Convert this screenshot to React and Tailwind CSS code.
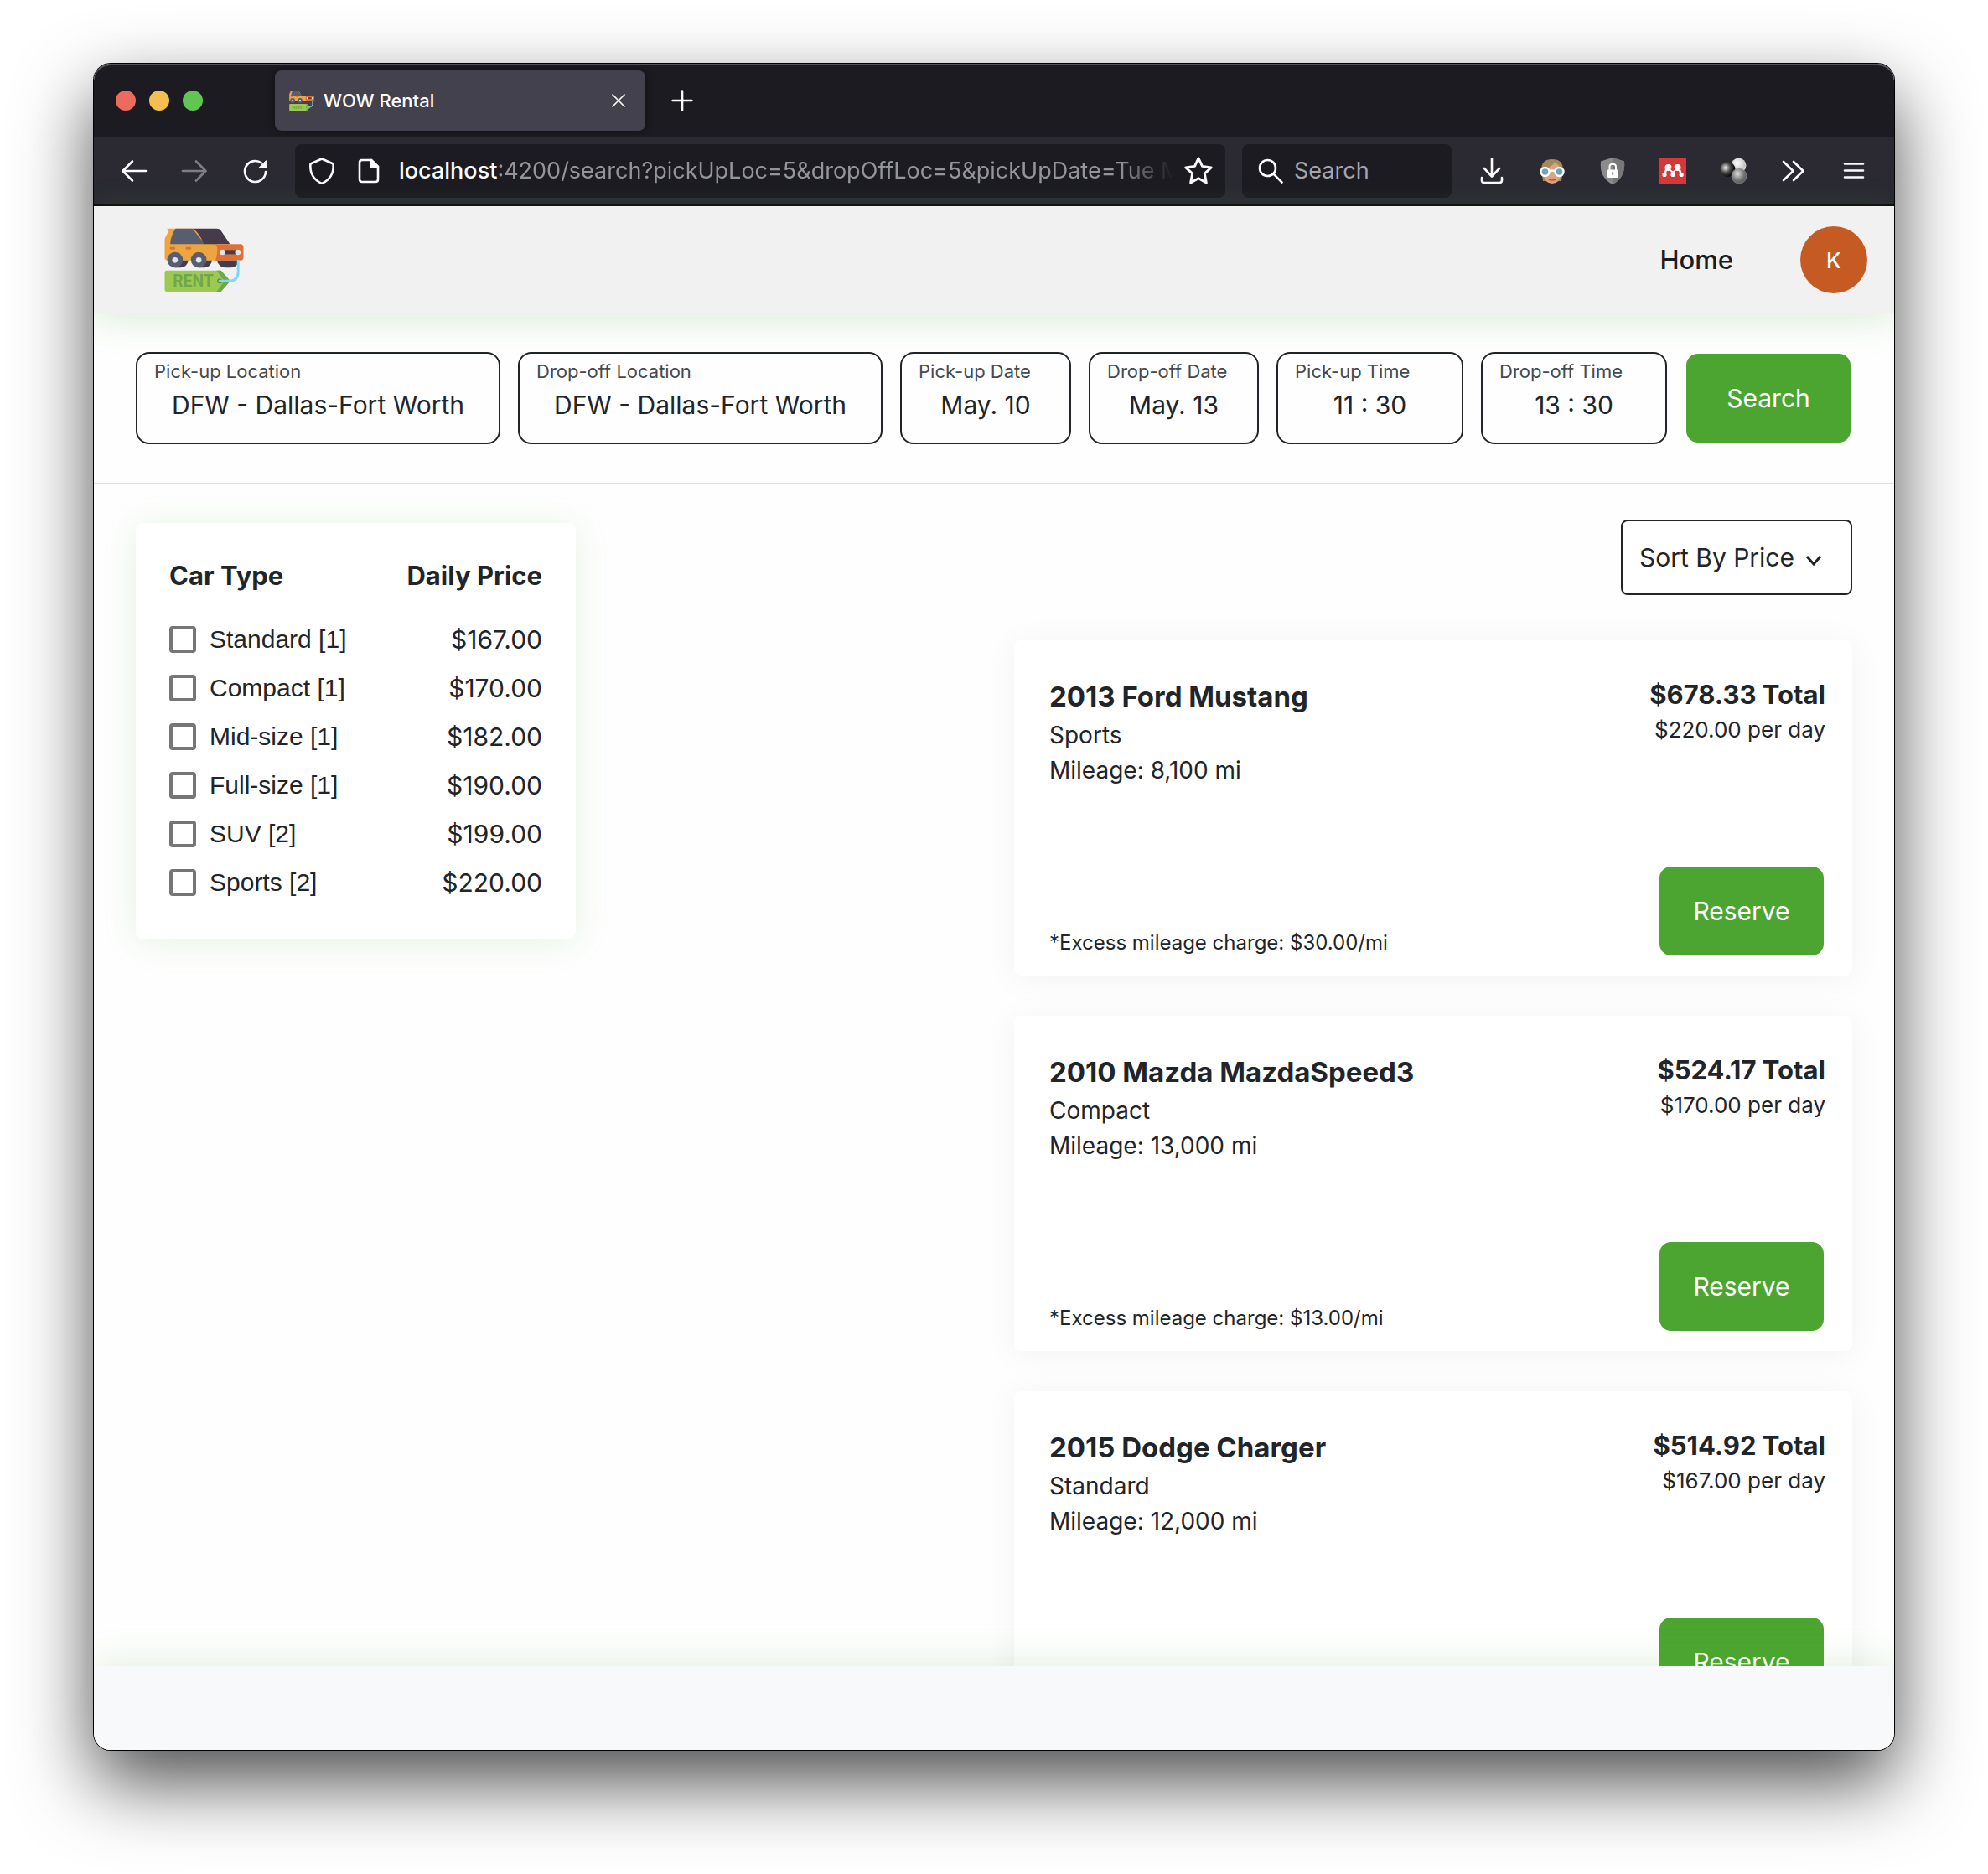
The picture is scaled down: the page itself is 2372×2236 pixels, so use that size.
import React from "react";

const filters = [
  ["Standard", 1, "$167.00"],
  ["Compact", 1, "$170.00"],
  ["Mid-size", 1, "$182.00"],
  ["Full-size", 1, "$190.00"],
  ["SUV", 2, "$199.00"],
  ["Sports", 2, "$220.00"],
];

const cars = [
  { name: "2013 Ford Mustang", type: "Sports", mileage: "8,100", excess: "$30.00", total: "$678.33", daily: "$220.00" },
  { name: "2010 Mazda MazdaSpeed3", type: "Compact", mileage: "13,000", excess: "$13.00", total: "$524.17", daily: "$170.00" },
  { name: "2015 Dodge Charger", type: "Standard", mileage: "12,000", total: "$514.92", daily: "$167.00" },
];

const fields = [
  ["pick-loc", "Pick-up Location", "DFW - Dallas-Fort Worth"],
  ["drop-loc", "Drop-off Location", "DFW - Dallas-Fort Worth"],
  ["pick-date", "Pick-up Date", "May. 10"],
  ["drop-date", "Drop-off Date", "May. 13"],
  ["pick-time", "Pick-up Time", "11 : 30"],
  ["drop-time", "Drop-off Time", "13 : 30"],
];

function RentLogo({ className }) {
  return (
    <svg viewBox="50 50 284 228" className={className} aria-hidden="true">
      <path d="M60 52H150L240 110V166H60Q51 166 51 156V92Q52 82 66 62Q60 60 60 52Z" fill="#eda540" />
      <path d="M90 52H150L195 108H71Q72 78 90 52Z" fill="#595d70" />
      <path d="M150 52H238Q247 52 252 59L285 108H191Q176 66 150 52Z" fill="#463b4a" />
      <path d="M230 108H322Q333 108 333 120V155Q333 166 322 166H232Q240 150 239 122Q238 112 230 108Z" fill="#e07038" />
      <rect x="69" y="118" width="20" height="9" rx="4" fill="#e07038" />
      <rect x="126" y="118" width="20" height="9" rx="4" fill="#e07038" />
      <path d="M88 192H108Q132 188 136 166H110Z" fill="#463b4a" />
      <path d="M172 192H194Q216 188 221 166H194Z" fill="#463b4a" />
      <path d="M238 166H316Q312 192 284 192H268Q244 190 238 166Z" fill="#463b4a" />
      <circle cx="88" cy="164" r="28" fill="#595d70" />
      <circle cx="173" cy="164" r="28" fill="#595d70" />
      <circle cx="88" cy="165" r="10" fill="#dbe7ef" />
      <circle cx="173" cy="165" r="10" fill="#dbe7ef" />
      <rect x="258" y="129" width="56" height="15" fill="#463b4a" />
      <circle cx="258" cy="137" r="10" fill="#dbe7ef" />
      <circle cx="313" cy="137" r="10" fill="#dbe7ef" />
      <path d="M58 202H250L286 240L250 278H58Q51 278 51 270V210Q51 202 58 202Z" fill="#9dc951" />
      <path d="M237 202H253L286 240L253 278H237L264 240Z" fill="#6fa84b" />
      <text x="80" y="261" fontFamily="Roboto, sans-serif" fontWeight="700" fontSize="58" fill="#6fa84b">RENT</text>
      <circle cx="248" cy="240" r="9" fill="#4f8f5a" />
      <path d="M248 240H284Q314 238 314 206V168" fill="none" stroke="#7fd7fb" strokeWidth="9" strokeLinecap="round" />
    </svg>
  );
}

function Icon({ children, className = "h-8 w-8", sw = 2.6 }) {
  return (
    <svg viewBox="0 0 32 32" className={className} fill="none" stroke="#fbfbfe" strokeWidth={sw} strokeLinecap="round" strokeLinejoin="round" aria-hidden="true">
      {children}
    </svg>
  );
}

function ToolButton({ label, children }) {
  return (
    <button type="button" aria-label={label} className="flex h-16 w-[72px] shrink-0 items-center justify-center">
      {children}
    </button>
  );
}

function TabBar() {
  return (
    <div className="flex h-[88px] shrink-0 items-center rounded-t-[20px] bg-[#1c1b22] pl-[26px] shadow-[inset_0_2px_0_#55545a]">
      <div className="flex gap-4">
        <button type="button" aria-label="Close window" className="h-6 w-6 rounded-full bg-[#ed6a5e]" />
        <button type="button" aria-label="Minimize window" className="h-6 w-6 rounded-full bg-[#f5bf4f]" />
        <button type="button" aria-label="Zoom window" className="h-6 w-6 rounded-full bg-[#61c554]" />
      </div>
      <div className="ml-[86px] flex h-[72px] w-[442px] items-center rounded-lg bg-[#42414d] pr-6 pl-4 shadow-[0_0_8px_rgba(0,0,0,0.5)]">
        <RentLogo className="h-6 w-8" />
        <span className="ml-[10px] grow text-[22px] font-medium text-[#fbfbfe]">WOW Rental</span>
        <button type="button" aria-label="Close tab">
          <Icon className="h-4 w-4" sw={3.4}><path d="M2 2L30 30M30 2L2 30" /></Icon>
        </button>
      </div>
      <button type="button" aria-label="New tab" className="ml-[30px]">
        <Icon className="h-7 w-7" sw={3}><path d="M16 3V29M3 16H29" /></Icon>
      </button>
    </div>
  );
}

function Toolbar() {
  return (
    <div className="flex h-[82px] shrink-0 items-center border-b-2 border-[#0c0c0d] bg-[#2b2a33] pr-3 pl-3">
      <ToolButton label="Back"><Icon><path d="M30 16H3M14 4.500L2.500 16L14 27.500" /></Icon></ToolButton>
      <ToolButton label="Forward"><Icon className="h-8 w-8 opacity-40"><path d="M2 16H29M18 4.500L29.500 16L18 27.500" /></Icon></ToolButton>
      <ToolButton label="Reload">
        <Icon>
          <path d="M24 6.500A12.500 12.500 0 1 0 29 17" />
          <path d="M29.500 4V12H21.500Z" fill="#fbfbfe" strokeWidth="1" />
        </Icon>
      </ToolButton>
      <div className="ml-3 flex h-16 min-w-0 grow items-center rounded-lg bg-[#1c1b22] pr-[14px] pl-4">
        <Icon className="h-8 w-8 shrink-0"><path d="M16 1.500L29.500 7.500C30.500 17 26.500 26 16 31C5.500 26 1.500 17 2.500 7.500Z" /></Icon>
        <Icon className="ml-6 h-8 w-8 shrink-0">
          <path d="M7 3H19L27 11V26Q27 29 24 29H8Q5 29 5 26V6Q5 3 8 3Z" />
          <path d="M19 3V11H27Z" fill="#fbfbfe" />
        </Icon>
        <label htmlFor="url" className="ml-5 shrink-0 text-[27px] font-medium text-[#fbfbfe]">localhost</label>
        <input
          id="url"
          readOnly
          value=":4200/search?pickUpLoc=5&dropOffLoc=5&pickUpDate=Tue May 10"
          className="min-w-0 grow bg-transparent text-[27px] text-[#94949c] outline-none [mask-image:linear-gradient(to_right,black_92%,transparent)]"
        />
        <button type="button" aria-label="Bookmark this page" className="ml-3 shrink-0">
          <Icon className="h-9 w-9"><path d="M16 2.500L20 11L29.500 12.300L22.500 18.800L24.300 28.500L16 23.800L7.700 28.500L9.500 18.800L2.500 12.300L12 11Z" /></Icon>
        </button>
      </div>
      <label className="ml-5 flex h-16 w-[250px] shrink-0 items-center gap-3 rounded-lg bg-[#1c1b22] pl-[18px]">
        <Icon className="h-8 w-8 shrink-0"><circle cx="12.500" cy="12.500" r="9.500" /><path d="M19.500 19.500L29.500 29.500" /></Icon>
        <input type="text" aria-label="Search the web" placeholder="Search" className="w-40 bg-transparent text-[27px] outline-none placeholder:text-[#a5a5ab]" />
      </label>
      <div className="ml-3 flex shrink-0">
        <ToolButton label="Downloads"><Icon><path d="M16 1.500V22M7 13L16 22.500L25 13M4 24V27Q4 30 7 30H25Q28 30 28 27V24" /></Icon></ToolButton>
        <ToolButton label="Profile extension">
          <svg viewBox="0 0 32 32" className="h-8 w-8" aria-hidden="true">
            <path d="M3 15Q3 2 16 2Q29 2 29 15L27 28H24L16 24L8 28H5Z" fill="#a38a5c" />
            <path d="M6 14Q13 13 19 6Q24 8 26 14V20Q26 30 16 31Q6 30 6 20Z" fill="#dfa27c" />
            <path d="M12 26Q16 28 20 26" stroke="#a9584c" strokeWidth="1.600" fill="none" />
            <circle cx="7.500" cy="17" r="5" fill="#6fa3b2" stroke="#fff" strokeWidth="2.400" />
            <circle cx="24.500" cy="17" r="5" fill="#6fa3b2" stroke="#fff" strokeWidth="2.400" />
            <path d="M12.500 16.500Q16 14.500 19.500 16.500" stroke="#fff" strokeWidth="2.400" fill="none" />
          </svg>
        </ToolButton>
        <ToolButton label="Privacy extension">
          <svg viewBox="0 0 32 32" className="h-8 w-8" aria-hidden="true">
            <path d="M16 0L30 4.500Q32 24 16 32Q0 24 2 4.500Z" fill="#8b8b8b" />
            <path d="M16 0L30 4.500Q32 24 16 32Z" fill="#777" />
            <rect x="10" y="14.500" width="12.500" height="9.500" rx="1" fill="#fff" />
            <path d="M12.500 15V11Q12.500 7.800 16.200 7.800Q20 7.800 20 11V15" fill="none" stroke="#fff" strokeWidth="2" />
            <path d="M16.200 17.500V20.500" stroke="#777" strokeWidth="2" />
          </svg>
        </ToolButton>
        <ToolButton label="Mendeley">
          <svg viewBox="0 0 32 32" className="h-8 w-8" aria-hidden="true">
            <rect width="32" height="32" fill="#d63838" />
            <g fill="#fff">
              <circle cx="10.500" cy="12" r="4" /><circle cx="21.500" cy="12" r="4" />
              <circle cx="6" cy="20.500" r="2.600" /><circle cx="16" cy="20.500" r="2.600" /><circle cx="26.200" cy="20.500" r="2.600" />
            </g>
            <path d="M6 20.500L9 12M16 20.500V16M26 20.500L23 12M10 10.500L16 18L22 10.500" stroke="#fff" strokeWidth="2.400" fill="none" />
            <circle cx="16" cy="13.500" r="2.400" fill="#d63838" />
          </svg>
        </ToolButton>
        <ToolButton label="Spheres extension">
          <svg viewBox="0 0 32 32" className="h-8 w-8" aria-hidden="true">
            <defs>
              <radialGradient id="light" cx="0.4" cy="0.35"><stop offset="0" stopColor="#fff" /><stop offset="1" stopColor="#c8c8c8" /></radialGradient>
              <radialGradient id="dark" cx="0.35" cy="0.4" r="0.65"><stop offset="0" stopColor="#f0f0f0" /><stop offset="0.5" stopColor="#4a4a4a" /><stop offset="1" stopColor="#000" /></radialGradient>
              <radialGradient id="mid" cx="0.4" cy="0.35" r="0.7"><stop offset="0" stopColor="#ddd" /><stop offset="0.6" stopColor="#777" /><stop offset="1" stopColor="#555" /></radialGradient>
            </defs>
            <circle cx="22.500" cy="9.500" r="9" fill="url(#light)" />
            <circle cx="9.500" cy="14" r="9" fill="url(#dark)" />
            <circle cx="23" cy="22" r="9" fill="url(#mid)" stroke="#999" strokeWidth="0.600" />
          </svg>
        </ToolButton>
        <ToolButton label="More tools"><Icon><path d="M4 5L15.500 16L4 27M16 5L27.500 16L16 27" /></Icon></ToolButton>
        <ToolButton label="Application menu"><Icon><path d="M5 7.500H27M5 15.500H27M5 23.500H27" /></Icon></ToolButton>
      </div>
    </div>
  );
}

function SiteHeader() {
  return (
    <header className="relative z-10 flex h-32 shrink-0 items-center justify-between bg-[#f1f1f1] pr-8 pl-[84px] shadow-[0_8px_40px_rgba(76,175,60,0.2)]">
      <a href="#home" aria-label="WOW Rental"><RentLogo className="h-[76px] w-[95px]" /></a>
      <nav className="flex items-center gap-20">
        <a href="#home" className="text-[31px] font-medium text-[#1c1d1f]">Home</a>
        <button type="button" className="h-20 w-20 rounded-full bg-[#c55b22] text-[26px] font-medium text-white">K</button>
      </nav>
    </header>
  );
}

function SearchForm() {
  return (
    <form className="grid shrink-0 grid-cols-[435fr_435fr_204fr_203fr_223fr_222fr_200fr] gap-[21px] border-b-2 border-[#e0e0e0] bg-[#fefefe] px-[50px] py-[46px]">
      {fields.map(([id, label, value]) => (
        <div key={id} className="flex h-[110px] min-w-0 flex-col rounded-2xl border-2 border-[#212529]">
          <label htmlFor={id} className="mt-[5px] pl-5 text-[22px] leading-8 text-[#46494d]">{label}</label>
          <input id={id} readOnly value={value} className="w-full bg-transparent text-center text-[30px] leading-[48px] outline-none" />
        </div>
      ))}
      <button type="button" className="h-[110px] rounded-2xl border-2 border-white bg-[#4ca530] text-[30px] text-white">Search</button>
    </form>
  );
}

function FilterCard() {
  return (
    <aside className="w-[525px] shrink-0 self-start rounded-lg bg-white px-10 pt-[34px] pb-[38px] shadow-[0_4px_40px_rgba(76,175,60,0.14)]">
      <table className="w-full">
        <thead>
          <tr className="h-[76px] align-top text-[31px] leading-[58px]">
            <th className="p-0 text-left font-bold">Car Type</th>
            <th className="p-0 text-right font-bold">Daily Price</th>
          </tr>
        </thead>
        <tbody>
          {filters.map(([type, count, price]) => (
            <tr key={type} className="h-[58px]">
              <td className="p-0">
                <label className="flex items-center gap-4 font-['Liberation_Sans',sans-serif] text-[30px] leading-[58px]">
                  <input type="checkbox" className="h-8 w-8 appearance-none rounded border-4 border-[#767676] bg-white" />
                  {type} [{count}]
                </label>
              </td>
              <td className="p-0 text-right text-[30px]">{price}</td>
            </tr>
          ))}
        </tbody>
      </table>
    </aside>
  );
}

function CarCard({ car }) {
  return (
    <article className="flex h-[400px] shrink-0 justify-between rounded-lg bg-white pt-[42px] pr-8 pb-[22px] pl-[42px] shadow-[0_4px_40px_rgba(0,0,0,0.05)]">
      <div className="flex flex-col">
        <h2 className="text-[33px] leading-[50px] font-bold">{car.name}</h2>
        <p className="text-[28px] leading-[42px]">{car.type}</p>
        <p className="text-[28px] leading-[42px]">Mileage: {car.mileage} mi</p>
        {car.excess && <p className="mt-auto text-[24px] leading-[34px]">*Excess mileage charge: {car.excess}/mi</p>}
      </div>
      <div className="flex flex-col items-end">
        <p className="text-[31px] leading-[46px] font-bold">{car.total} Total</p>
        <p className="text-[26px] leading-[38px]">{car.daily} per day</p>
        <button type="button" className="mt-auto h-[110px] w-[200px] rounded-2xl border-2 border-white bg-[#4ca530] text-[30px] text-white">Reserve</button>
      </div>
    </article>
  );
}

export default function App() {
  return (
    <div className="flex h-screen flex-col bg-white px-28 pt-[76px] pb-[148px] font-['Inter',sans-serif] text-[#212529]">
      <div className="flex min-h-0 grow flex-col overflow-hidden rounded-[20px] bg-white shadow-[0_0_0_1px_#000,0_38px_90px_rgba(0,0,0,0.7)]">
        <TabBar />
        <Toolbar />
        <SiteHeader />
        <SearchForm />
        <main className="flex min-h-0 grow justify-between overflow-hidden bg-[#fefefe] px-[50px]">
          <div className="pt-[46px]"><FilterCard /></div>
          <section className="flex w-[1000px] flex-col pt-[42px]">
            <label className="relative self-end">
              <select aria-label="Sort order" className="h-[90px] w-[276px] appearance-none rounded-lg border-2 border-[#212529] bg-white pl-5 text-[30px]">
                <option>Sort By Price</option>
              </select>
              <svg viewBox="0 0 20 14" className="pointer-events-none absolute top-[42px] right-9 h-[14px] w-5" fill="none" stroke="#212529" strokeWidth="3" aria-hidden="true">
                <path d="M2 2L10 11L18 2" />
              </svg>
            </label>
            <div className="mt-[54px] flex flex-col gap-12">
              {cars.map((car) => <CarCard key={car.name} car={car} />)}
            </div>
          </section>
        </main>
        <footer className="relative z-10 h-[100px] shrink-0 bg-[#f8f9fb] shadow-[0_-8px_40px_rgba(76,175,60,0.14)]" />
      </div>
    </div>
  );
}
